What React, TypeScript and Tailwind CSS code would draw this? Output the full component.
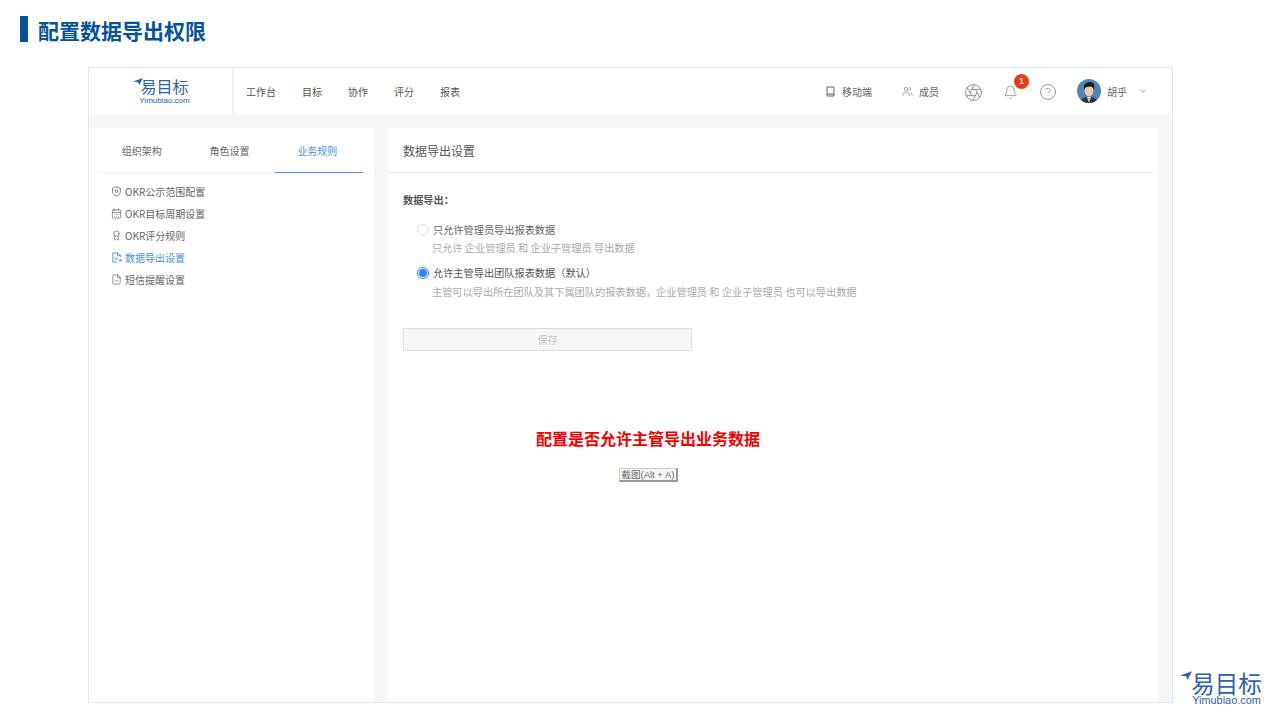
import { Aperture, ChevronDown, CircleHelp, Bell, Users, CalendarDays, Award, FileMinus } from "lucide-react";

const nav = ["工作台", "目标", "协作", "评分", "报表"];

function ShieldDot({ className }: { className?: string }) {
  return (
    <svg viewBox="0 0 24 24" className={className} fill="none" stroke="currentColor" strokeWidth="1.8">
      <path d="M12 2 L20.5 5 V12 C20.5 17 16.5 20.5 12 22 C7.5 20.5 3.5 17 3.5 12 V5 Z" />
      <circle cx="12" cy="11" r="3" />
    </svg>
  );
}

function FileExport({ className }: { className?: string }) {
  return (
    <svg viewBox="0 0 24 24" className={className} fill="none" stroke="currentColor" strokeWidth="2">
      <path d="M21 11 V7 L15 2 H4 V22 H13" />
      <path d="M14 2 V8 H21" />
      <path d="M9 12 L14 17 M14 12 L9 17" />
      <path d="M17 18 H23 M20 15 L23 18 L20 21" />
    </svg>
  );
}

function Phone() {
  return (
    <svg viewBox="0 0 12 12" className="w-[11px] h-[11px]" fill="none" stroke="#666" strokeWidth="1.1">
      <rect x="2.2" y="1" width="7.6" height="10" rx="1" />
      <path d="M2.2 8.8 H9.8" />
    </svg>
  );
}

const menu = [
  { label: "OKR公示范围配置", icon: ShieldDot },
  { label: "OKR目标周期设置", icon: CalendarDays },
  { label: "OKR评分规则", icon: Award },
  { label: "数据导出设置", icon: FileExport, active: true },
  { label: "短信提醒设置", icon: FileMinus },
];

function Logo({ big }: { big?: boolean }) {
  return (
    <div className={`flex flex-col items-center text-[#2b62b5] ${big ? "w-[71px]" : "w-[49px]"}`}>
      <div className={`relative flex items-center ${big ? "h-[21px] leading-[21px]" : "h-[15px] leading-[15px]"}`}>
        <svg
          viewBox="0 0 14 10"
          className={`absolute ${big ? "-left-[11px] -top-[2px] w-[12px] h-[9px]" : "-left-[7px] -top-[1px] w-[10px] h-[7px]"}`}
        >
          <path d="M0 5 L14 0 L9 10 L7 6 Z" fill="#2b62b5" />
        </svg>
        <span className={big ? "text-[23.5px]" : "text-[16px]"}>易目标</span>
      </div>
      <span className={`font-['Liberation_Sans',sans-serif] whitespace-nowrap ${big ? "text-[10.9px] leading-[11px] mt-[1px]" : "text-[8px] leading-[9px] mt-[2px]"}`}>
        Yimubiao.com
      </span>
    </div>
  );
}

function Avatar() {
  return (
    <svg viewBox="0 0 24 24" className="w-6 h-6 rounded-full">
      <rect width="24" height="24" fill="#4f86b8" />
      <path d="M3 24 C4 19 8 18 12 18 C16 18 20 19 21 24 Z" fill="#2b2f38" />
      <path d="M10 18 L12 24 L14 18 Z" fill="#f4f1ec" />
      <path d="M11.4 19 L12 23 L12.6 19 Z" fill="#e8552d" />
      <ellipse cx="12" cy="11.5" rx="4.4" ry="6" fill="#f0c9a8" />
      <path d="M7 11 C6 5 9 3 13 3 C17 3 18 7 17 11 C16 8 15 7.5 13 7.5 C11 8 9 8 8.5 8.5 C8 9 7.6 10 7 11 Z" fill="#1d1a1c" />
    </svg>
  );
}

export default function App() {
  return (
    <div className="relative w-[1280px] h-[720px] overflow-hidden bg-white font-['Noto_Sans_CJK_SC','Noto_Sans',sans-serif]">
      {/* title */}
      <div className="flex items-start gap-[10px] pl-5 pt-4 h-[67px]">
        <div className="w-2 h-[26px] bg-[#04539b]" />
        <h1 className="text-[21px] leading-[28px] font-bold text-[#04539b]">配置数据导出权限</h1>
      </div>

      {/* app frame */}
      <div className="ml-[88px] w-[1085px] h-[636px] border border-[#dbe7f3] bg-[#f5f7f9] flex flex-col">
        <header className="h-[46px] bg-white flex items-center shrink-0">
          <div className="w-[145px] h-full flex items-center justify-center border-r-2 border-[#eef0f2] pl-[8px] pt-[1px]">
            <Logo />
          </div>
          <nav className="flex items-center gap-[26px] pl-[12px] text-[10px] text-[#555]">
            {nav.map((n) => (
              <span key={n}>{n}</span>
            ))}
          </nav>
          <div className="ml-auto flex items-center text-[10px] text-[#666] pr-[24px]">
            <div className="flex items-center gap-[6px]">
              <Phone />
              <span>移动端</span>
            </div>
            <div className="flex items-center gap-[6px] ml-[30px]">
              <Users className="w-[11px] h-[11px] text-[#777]" strokeWidth={1.3} />
              <span>成员</span>
            </div>
            <Aperture className="ml-[25px] mt-[2px] w-[19px] h-[19px] text-[#777]" strokeWidth={1} />
            <div className="relative ml-[20px] mt-[3px]">
              <Bell className="w-[15px] h-[15px] text-[#777]" strokeWidth={1.1} />
              <span className="absolute -top-[11px] left-[11px] w-[15px] h-[15px] rounded-full bg-[#ee3a12] text-white text-[9px] font-bold flex items-center justify-center font-['Liberation_Sans',sans-serif]">
                1
              </span>
            </div>
            <CircleHelp className="w-[18px] h-[18px] ml-[21px] mt-[2px] text-[#777]" strokeWidth={1} />
            <div className="ml-[20px]">
              <Avatar />
            </div>
            <span className="ml-[6px]">胡乎</span>
            <ChevronDown className="w-[10px] h-[10px] ml-[11px] text-[#666]" strokeWidth={1.5} />
          </div>
        </header>

        <div className="flex-1 flex gap-[14px] pt-[14px] pr-[14px] min-h-0">
          {/* left panel */}
          <aside className="w-[285px] bg-white shrink-0">
            <div className="mx-[11px] h-[45px] flex border-b border-[#eef0f2] text-[10px] text-[#666]">
              <div className="w-[88px] pr-1 flex items-center justify-center">组织架构</div>
              <div className="w-[88px] pr-1 flex items-center justify-center">角色设置</div>
              <div className="w-[88px] pr-1 flex items-center justify-center text-[#4a90e8] border-b border-[#4a90e8] -mb-px">业务规则</div>
            </div>
            <ul className="pt-[7px] pl-[22px] text-[10px]">
              {menu.map((m) => (
                <li key={m.label} className={`h-[22px] flex items-center gap-[3px] ${m.active ? "text-[#4a90e8]" : "text-[#666]"}`}>
                  <m.icon className="w-[11px] h-[11px]" strokeWidth={1.5} />
                  <span>{m.label}</span>
                </li>
              ))}
            </ul>
          </aside>

          {/* right panel */}
          <main className="flex-1 bg-white pl-[15px]">
            <div className="h-[45px] -ml-[15px] pl-[15px] mr-[5px] flex items-center border-b border-[#e8eaec] text-[12px] text-[#555] pt-[1px]">
              数据导出设置
            </div>
            <div className="pt-[20px] text-[10.2px]">
              <p className="font-bold leading-[14px] text-[#555]">数据导出：</p>
              <div className="pl-[14px] mt-[15px]">
                <label className="flex items-center gap-[4px] h-[16px] text-[#666]">
                  <span className="w-3 h-3 rounded-full border border-[#ddd] bg-white" />
                  只允许管理员导出报表数据
                </label>
                <p className="pl-[15px] mt-[2px] leading-[16px] text-[#aaa]">只允许 企业管理员 和 企业子管理员 导出数据</p>
                <label className="flex items-center gap-[4px] h-[16px] mt-[9px] text-[#555]">
                  <span className="w-3 h-3 rounded-full border border-[#2d85f0] flex items-center justify-center">
                    <span className="w-2 h-2 rounded-full bg-[#2d85f0]" />
                  </span>
                  允许主管导出团队报表数据（默认）
                </label>
                <p className="pl-[15px] mt-[3px] leading-[16px] text-[#aaa]">
                  主管可以导出所在团队及其下属团队的报表数据，企业管理员 和 企业子管理员 也可以导出数据
                </p>
              </div>
              <button className="block mt-[28px] w-[289px] h-[23px] rounded-[2px] border border-[#ddd] bg-[#f6f6f6] text-[#c4c4c4] text-[10px]">
                保存
              </button>
            </div>
          </main>
        </div>
      </div>

      {/* annotation over the screenshot */}
      <div className="absolute left-[536px] top-[426px] text-[16px] leading-[24px] font-bold text-[#f20000]">
        配置是否允许主管导出业务数据
      </div>
      <div className="absolute left-[619px] top-[468px] h-[14px] w-[59px] border border-[#ccc] border-r-2 border-b-2 border-r-[#999] border-b-[#999] bg-[#f6f6f6] text-[9.5px] leading-[12px] text-[#666] text-center whitespace-nowrap font-['Liberation_Sans','Noto_Sans_CJK_SC',sans-serif]">
        截图(Alt + A)
      </div>
      <div className="absolute left-[1191px] top-[673px]">
        <Logo big />
      </div>
    </div>
  );
}
